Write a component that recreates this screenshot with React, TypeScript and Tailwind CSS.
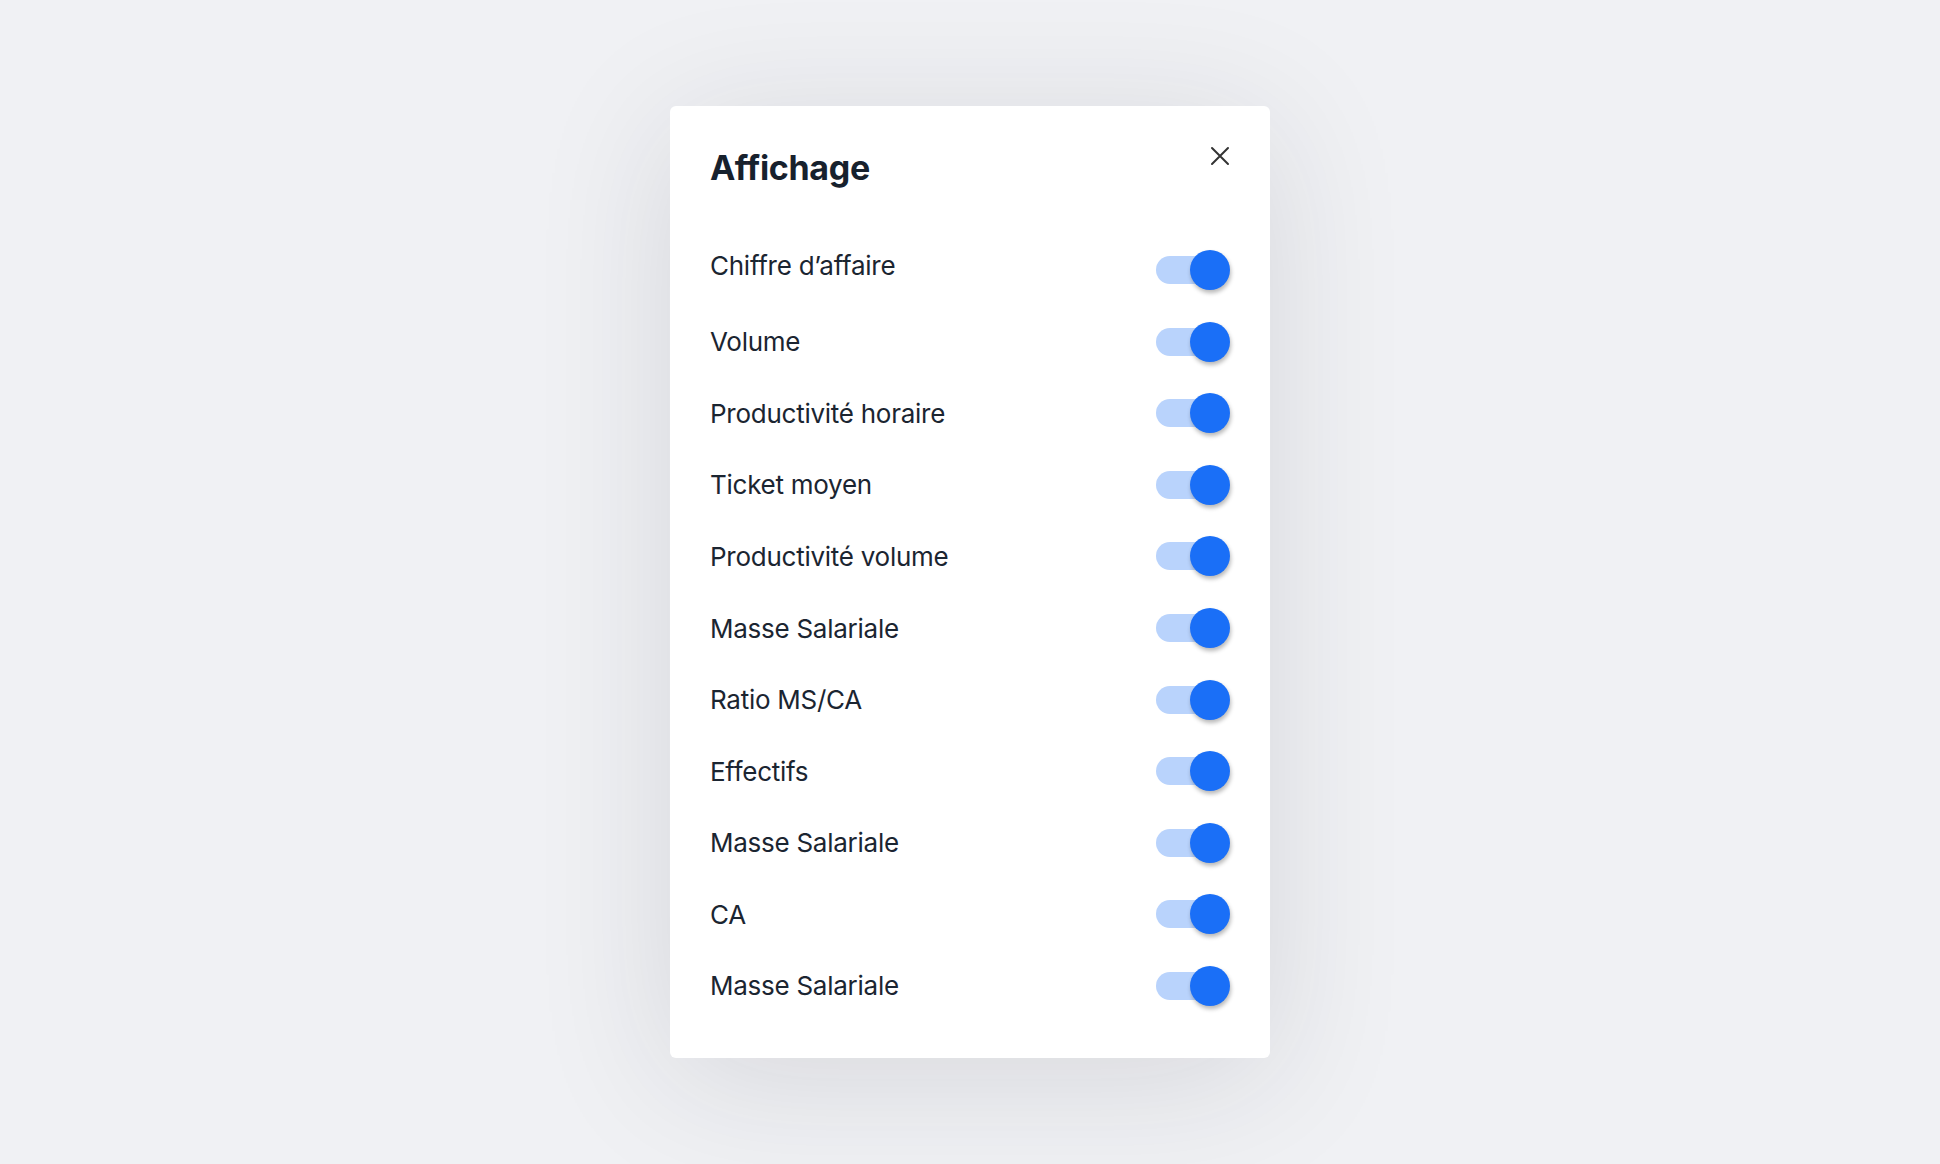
import { useState } from "react";

const ITEMS = [
  "Chiffre d’affaire",
  "Volume",
  "Productivité horaire",
  "Ticket moyen",
  "Productivité volume",
  "Masse Salariale",
  "Ratio MS/CA",
  "Effectifs",
  "Masse Salariale",
  "CA",
  "Masse Salariale",
];

function Toggle({ on, onClick }: { on: boolean; onClick: () => void }) {
  return (
    <button onClick={onClick} className="relative h-10 w-[74px] shrink-0">
      <span className={`absolute left-0 top-[6px] h-7 w-[68px] rounded-full ${on ? "bg-[#b9d3fc]" : "bg-[#d5d8de]"}`} />
      <span
        className={`absolute top-0 h-10 w-10 rounded-full shadow-[1px_3px_4px_rgba(0,0,0,0.28)] ${
          on ? "left-[34px] bg-[#1a6ff7]" : "left-0 bg-white"
        }`}
      />
    </button>
  );
}

export default function App() {
  const [values, setValues] = useState<boolean[]>(ITEMS.map(() => true));

  return (
    <div className="min-h-screen w-full flex items-center justify-center bg-[#f0f1f4] font-['Inter',sans-serif]">
      <div className="w-[600px] rounded-md bg-white px-10 pt-10 pb-9 shadow-[0_20px_140px_rgba(30,35,50,0.12)]">
        {/* Header */}
        <div className="flex items-start justify-between">
          <h1 className="text-[34px] leading-[44px] font-bold text-[#17212d] tracking-[-0.01em]">Affichage</h1>
          <button className="h-5 w-5 text-[#333]" title="Fermer">
            <svg width="20" height="20" viewBox="0 0 20 20" fill="none" stroke="currentColor" strokeWidth="2" strokeLinecap="round">
              <path d="M2 2l16 16M18 2L2 18" />
            </svg>
          </button>
        </div>

        {/* Rows */}
        <div className="mt-11 flex flex-col">
          {ITEMS.map((label, i) => (
            <div key={i} className="flex h-[71.6px] items-center justify-between">
              <span className={`text-[26px] tracking-[-0.01em] text-[#1b2531] ${i === 0 ? "mb-[10px]" : ""}`}>{label}</span>
              <Toggle
                on={values[i]}
                onClick={() => setValues((v) => v.map((x, j) => (j === i ? !x : x)))}
              />
            </div>
          ))}
        </div>
      </div>
    </div>
  );
}
